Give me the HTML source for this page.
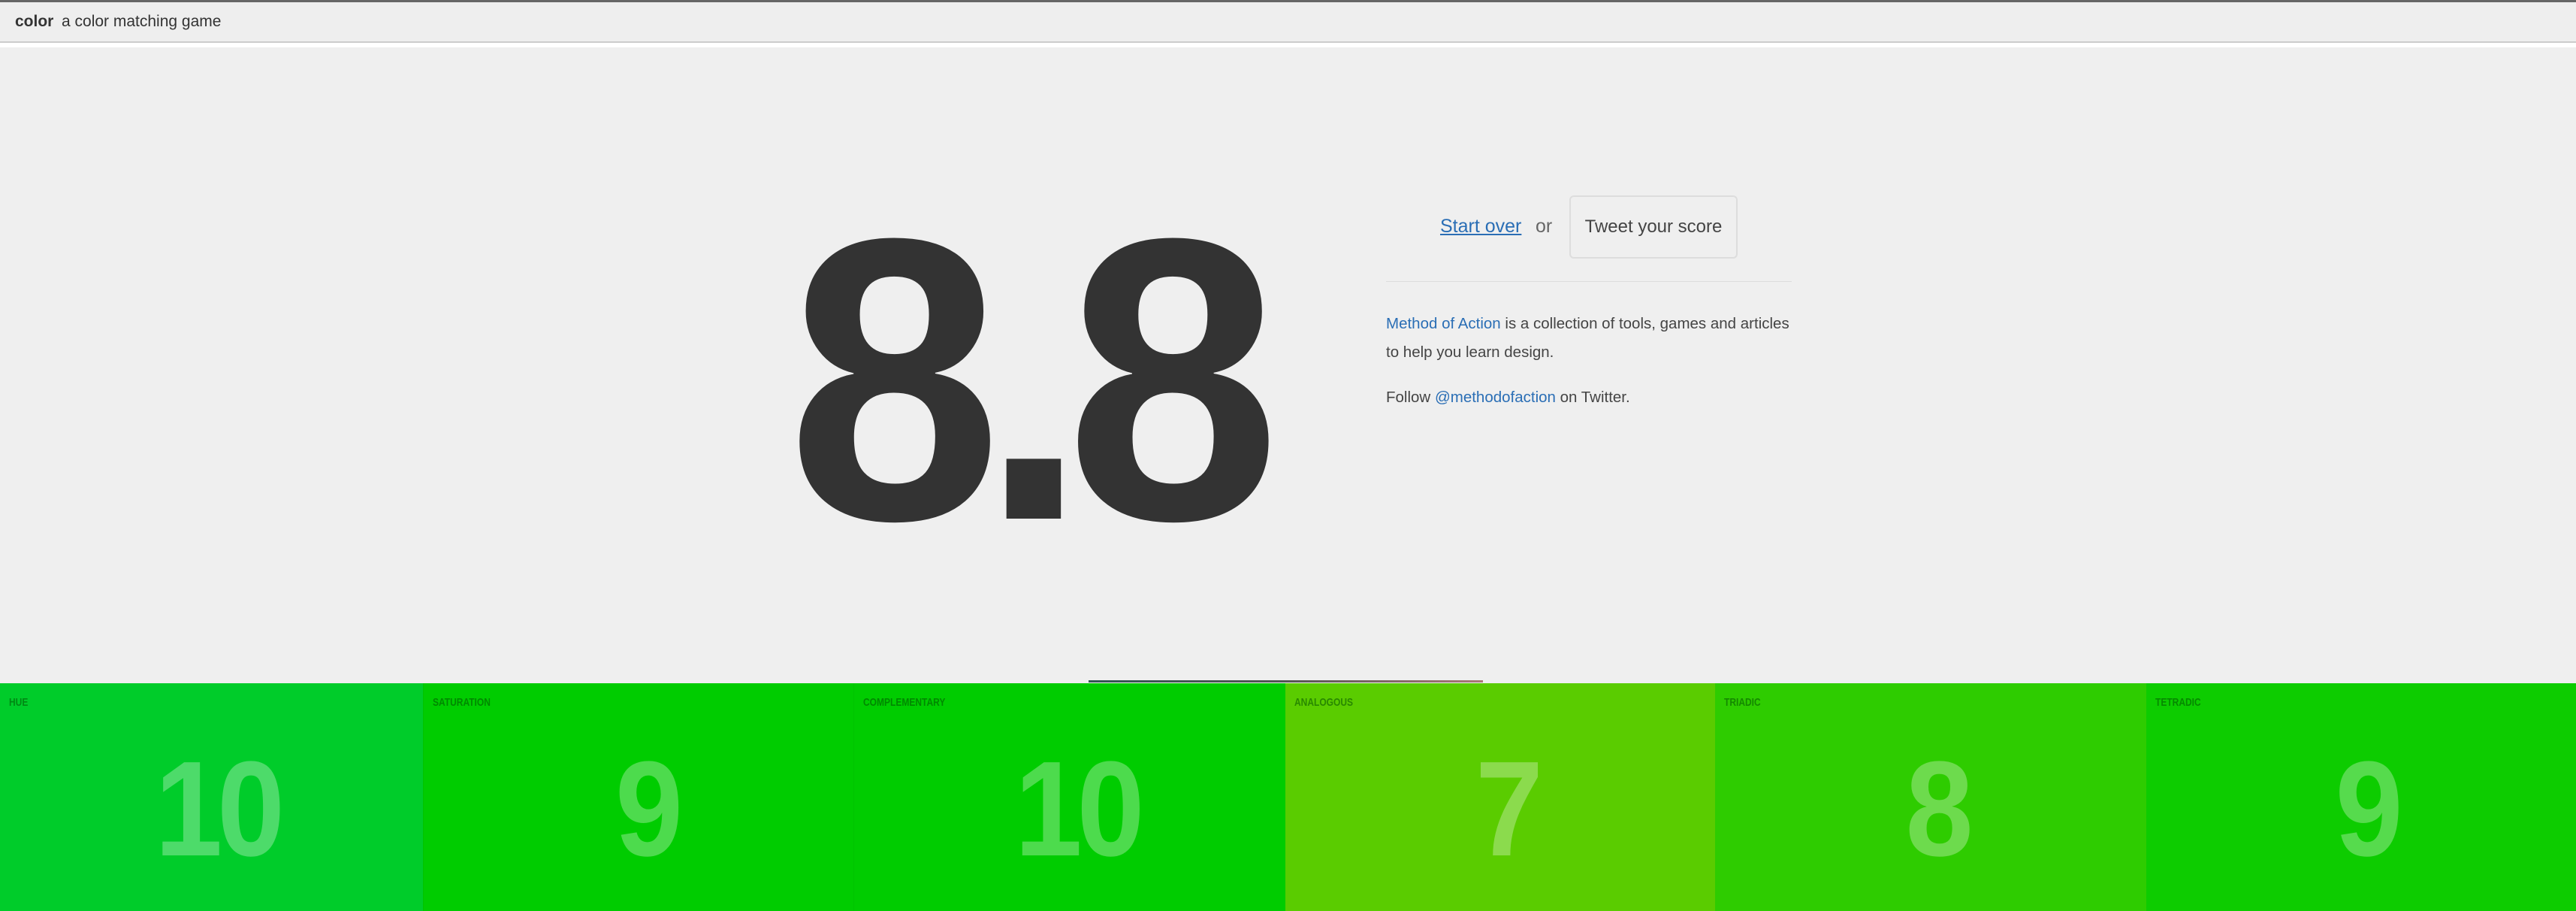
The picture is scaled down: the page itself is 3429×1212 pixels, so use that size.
<!DOCTYPE html>
<html><head><meta charset="utf-8"><style>
*{margin:0;padding:0;box-sizing:border-box}
html,body{width:3429px;height:1212px;overflow:hidden;background:#efefef;font-family:"Liberation Sans",sans-serif;color:#333}
.top{position:absolute;left:0;top:0;width:3429px;height:3px;background:#666}
.hdr{position:absolute;left:0;top:3px;width:3429px;height:54px;background:#eee;border-bottom:2px solid #ccc}
.hdr span{position:absolute;top:14px;font-size:21px;color:#333}
.gap{position:absolute;left:0;top:57px;width:3429px;height:6px;background:#fff}
.big{position:absolute;left:1048px;top:238px;font-size:535px;font-weight:bold;color:#333;letter-spacing:-30px;line-height:1;transform:scaleX(0.96);transform-origin:left}
.so{position:absolute;left:1917px;top:287px;font-size:25px;color:#2a6eb5;text-decoration:underline}
.or{position:absolute;left:2044px;top:287px;font-size:25px;color:#666}
.btn{position:absolute;left:2089px;top:260px;width:224px;height:84px;border:2px solid #ddd;border-radius:6px;font-size:24px;color:#444;text-align:center;line-height:80px}
.hr{position:absolute;left:1845px;top:374px;width:540px;height:1px;background:#ddd}
.p{position:absolute;left:1845px;font-size:20.5px;color:#444}
.p a{color:#2a6eb5;text-decoration:none}
.tile{position:absolute;top:909px;height:303px;width:572px}
.tile .l{position:absolute;left:12px;top:17px;font-size:15px;color:rgba(0,80,0,.55);font-weight:bold;transform:scaleX(.8);transform-origin:left}
.tile .n{position:absolute;left:14px;right:0;top:78px;text-align:center;font-size:180px;font-weight:bold;color:rgba(255,255,255,.3);line-height:1;letter-spacing:-8px;transform:scaleX(.9)}
.bar{position:absolute;left:1449px;top:905px;width:525px;height:3px;background:linear-gradient(90deg,#355 0,#555 50%,#a77 100%)}
</style></head><body>
<div class="top"></div>
<div class="hdr"><span style="left:20px;font-weight:bold">color</span><span style="left:82px">a color matching game</span></div>
<div class="gap"></div>
<div class="big">8.8</div>
<div class="so">Start over</div>
<div class="or">or</div>
<div class="btn">Tweet your score</div>
<div class="hr"></div>
<div class="p" style="top:419px"><a>Method of Action</a> is a collection of tools, games and articles</div>
<div class="p" style="top:457px">to help you learn design.</div>
<div class="p" style="top:517px">Follow <a>@methodofaction</a> on Twitter.</div>
<div class="bar"></div>
<div class="tile" style="left:0;width:564px;background:#00cc2a"><div class="l">HUE</div><div class="n">10</div></div>
<div class="tile" style="left:563px;width:580px;background:#00cc00;border-left:1px solid #00c400"><div class="l">SATURATION</div><div class="n">9</div></div>
<div class="tile" style="left:1136px;width:580px;background:#00cc00;border-left:1px solid #00c400"><div class="l">COMPLEMENTARY</div><div class="n">10</div></div>
<div class="tile" style="left:1711px;width:575px;background:#5acc00"><div class="l">ANALOGOUS</div><div class="n">7</div></div>
<div class="tile" style="left:2283px;width:576px;background:#2ecc00"><div class="l">TRIADIC</div><div class="n">8</div></div>
<div class="tile" style="left:2857px;background:#0dcc00"><div class="l">TETRADIC</div><div class="n">9</div></div>
</body></html>
